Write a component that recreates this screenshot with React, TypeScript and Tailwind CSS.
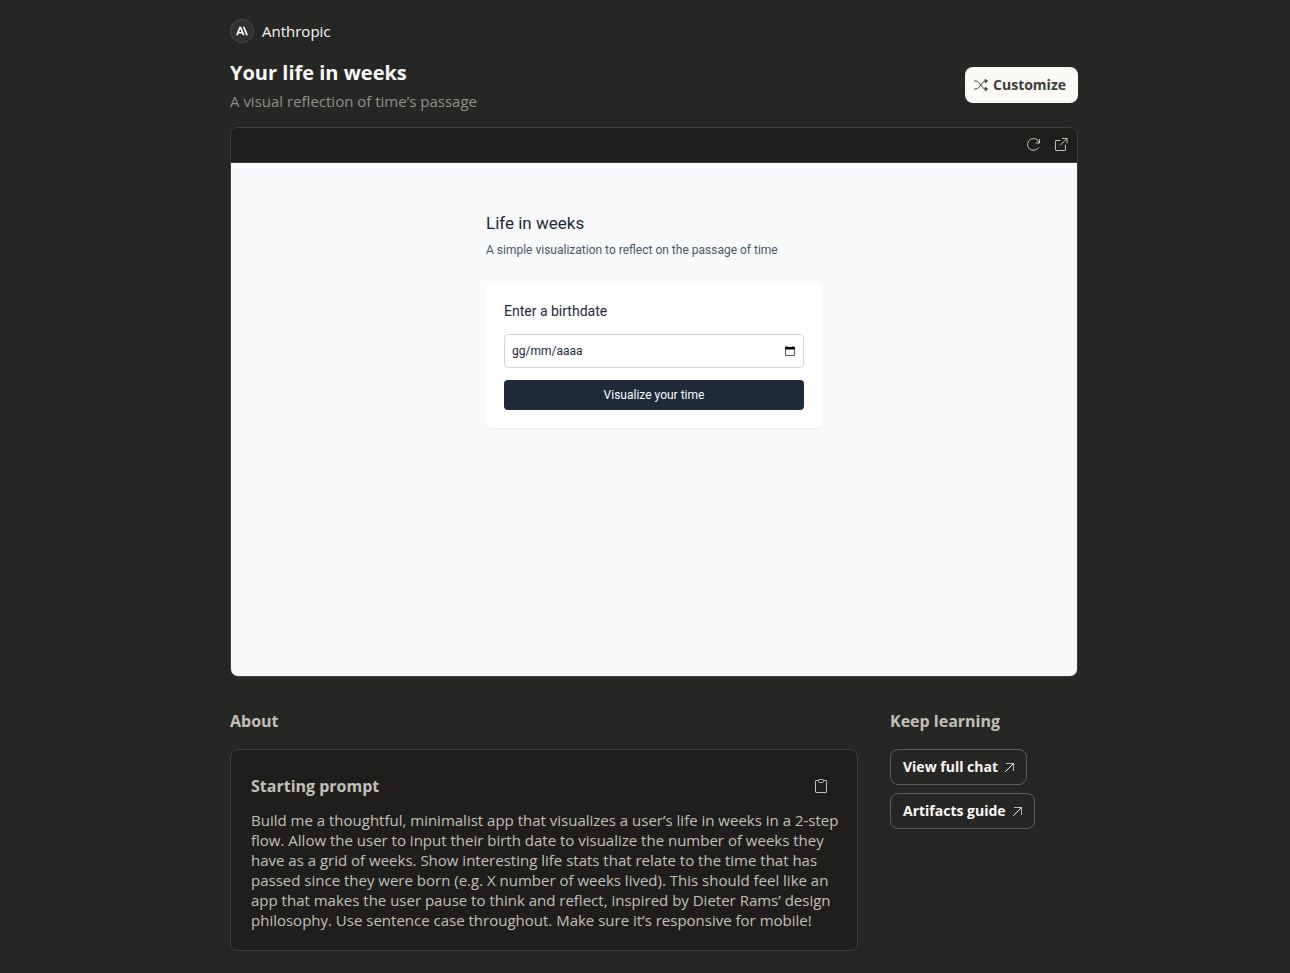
import { useState } from "react";

const PROMPT =
  "Build me a thoughtful, minimalist app that visualizes a user’s life in weeks in a 2-step flow. Allow the user to input their birth date to visualize the number of weeks they have as a grid of weeks. Show interesting life stats that relate to the time that has passed since they were born (e.g. X number of weeks lived). This should feel like an app that makes the user pause to think and reflect, inspired by Dieter Rams’ design philosophy. Use sentence case throughout. Make sure it’s responsive for mobile!";

const links = [
  { label: "View full chat", href: "#chat" },
  { label: "Artifacts guide", href: "#guide" },
];

function Logo() {
  return (
    <svg className="h-3 w-3" viewBox="0 0 24 24" fill="currentColor" aria-hidden="true">
      <path d="M17.3041 3.541h-3.6718l6.696 16.918H24Zm-10.6082 0L0 20.459h3.7442l1.3693-3.5527h7.0052l1.3693 3.5528h3.7442L10.5363 3.5409Zm-.3712 10.2232 2.2914-5.9456 2.2914 5.9456Z" />
    </svg>
  );
}

function ShuffleIcon() {
  return (
    <svg className="h-4 w-4" viewBox="0 0 16 16" fill="none" stroke="currentColor" strokeWidth="1" strokeLinecap="round" strokeLinejoin="round" aria-hidden="true">
      <path d="M1.500 4h1c1.600 0 2.700.8 3.700 2l3 4c1 1.200 2 2 3.500 2h.8" />
      <path d="M1.500 12h1c1.600 0 2.700-.8 3.700-2l3-4c1-1.200 2-2 3.500-2h.8" />
      <path d="M12.500 2.500 14.500 4l-2 1.500zM12.500 10.500l2 1.500-2 1.500z" fill="currentColor" />
    </svg>
  );
}

function ReloadIcon() {
  return (
    <svg className="h-4 w-4" viewBox="0 0 16 16" fill="none" stroke="currentColor" strokeWidth="1" strokeLinecap="round" strokeLinejoin="round" aria-hidden="true">
      <path d="M14.500 2.500v3.500h-3.500" />
      <path d="M14.300 5.800A6 6 0 1 0 13.500 10.800" />
    </svg>
  );
}

function OpenIcon() {
  return (
    <svg className="h-4 w-4" viewBox="0 0 16 16" fill="none" stroke="currentColor" strokeWidth="1" strokeLinecap="round" strokeLinejoin="round" aria-hidden="true">
      <path d="M7 3.500H3a.5.5 0 0 0-.5.5v9a.5.5 0 0 0 .5.5h9a.5.5 0 0 0 .5-.5V8" />
      <path d="M9.500 1.500h4.500V6M14 1.500 7.500 8" />
    </svg>
  );
}

function ClipboardIcon() {
  return (
    <svg className="h-4 w-4" viewBox="0 0 16 16" fill="none" stroke="currentColor" strokeWidth="1" strokeLinejoin="round" aria-hidden="true">
      <path d="M5.500 2.500H3a.5.5 0 0 0-.5.5v11a.5.5 0 0 0 .5.5h10a.5.5 0 0 0 .5-.5V3a.5.5 0 0 0-.5-.5h-2.500" />
      <path d="M5.500 2.200c0-.4.300-.7.700-.7h3.600c.4 0 .7.300.7.700v1.300a1 1 0 0 1-1 1h-3a1 1 0 0 1-1-1z" />
    </svg>
  );
}

function ArrowIcon() {
  return (
    <svg className="h-2.5 w-2.5" viewBox="0 0 10 10" fill="none" stroke="currentColor" strokeWidth="1" strokeLinecap="round" strokeLinejoin="round" aria-hidden="true">
      <path d="M2.500 1.500h7v7" opacity="0.7" />
      <path d="M9.500 1.500 1.500 9.500" />
    </svg>
  );
}

function CalendarIcon() {
  return (
    <svg className="h-3 w-3" viewBox="0 0 12 12" aria-hidden="true">
      <path d="M1.500 2.500h9v8h-9z" fill="none" stroke="#555" />
      <path d="M1 2h10v2.500H1zM2.500 1h1v1h-1zM8.500 1h1v1h-1z" fill="#000" />
    </svg>
  );
}

function LifeInWeeks() {
  const [birthdate, setBirthdate] = useState("");

  return (
    <div className="min-h-[513px] bg-[#f9fafc] px-4 pt-12 font-['Roboto',sans-serif] text-gray-800">
      <div className="mx-auto max-w-84">
        <h2 className="text-[17px] leading-6">Life in weeks</h2>
        <p className="mt-1 text-xs leading-[22px] text-gray-600">
          A simple visualization to reflect on the passage of time
        </p>

        <form
          onSubmit={(e) => e.preventDefault()}
          className="mt-[22px] rounded bg-white p-[18px] shadow-xs"
        >
          <label htmlFor="birthdate" className="block text-sm leading-[21px]">
            Enter a birthdate
          </label>
          <div className="mt-3 flex h-[34px] items-center rounded border border-gray-300 px-[7px]">
            <input
              id="birthdate"
              type="text"
              placeholder="gg/mm/aaaa"
              value={birthdate}
              onChange={(e) => setBirthdate(e.target.value)}
              className="min-w-0 flex-1 text-xs outline-none placeholder:text-gray-800"
            />
            <button type="button" aria-label="Open calendar">
              <CalendarIcon />
            </button>
          </div>
          <button
            type="submit"
            className="mt-3 h-[30px] w-full rounded bg-gray-800 text-xs text-white"
          >
            Visualize your time
          </button>
        </form>
      </div>
    </div>
  );
}

export default function App() {
  return (
    <div className="min-h-screen bg-[#262624] pr-4 pb-[22px] pl-[34px] font-['Open_Sans',sans-serif] text-[#faf9f5]">
      <main className="mx-auto max-w-[848px] pt-[19px]">
        <header className="flex items-end justify-between">
          <div>
            <div className="flex items-center gap-2">
              <span className="flex h-6 w-6 items-center justify-center rounded-full border border-[#4a4a46] bg-[#30302e]">
                <Logo />
              </span>
              <span className="text-[15px] leading-5">Anthropic</span>
            </div>
            <h1 className="mt-4 text-xl leading-7 font-bold">Your life in weeks</h1>
            <p className="mt-1 text-[15px] leading-5 text-[#91908a]">A visual reflection of time’s passage</p>
          </div>
          <button className="mb-2 flex h-9 items-center gap-1 rounded-lg bg-[#faf9f5] pr-3 pl-2 text-sm font-bold text-[#3d3d3a]">
            <ShuffleIcon />
            Customize
          </button>
        </header>

        <section className="mt-4 overflow-hidden rounded-lg border border-[#3e3e3a]">
          <div className="flex h-[35px] items-center justify-end gap-3 border-b border-[#3e3e3a] bg-[#1f1e1d] px-2 text-[#c2c0b6]">
            <button aria-label="Reload">
              <ReloadIcon />
            </button>
            <button aria-label="Open in new tab">
              <OpenIcon />
            </button>
          </div>
          <LifeInWeeks />
        </section>

        <div className="mt-8 flex flex-col gap-8 md:flex-row">
          <section className="min-w-0 flex-1">
            <h2 className="text-base leading-6 font-bold text-[#c2c0b6]">About</h2>
            <div className="mt-4 rounded-lg border border-[#3e3e3a] bg-[#1f1e1d] py-5 pr-4 pl-5 text-[#c2c0b6]">
              <div className="flex h-8 items-center justify-between pr-3">
                <h3 className="text-base leading-6 font-bold">Starting prompt</h3>
                <button aria-label="Copy prompt">
                  <ClipboardIcon />
                </button>
              </div>
              <p className="mt-2 text-[15px] leading-5">{PROMPT}</p>
            </div>
          </section>

          <section className="md:w-[188px]">
            <h2 className="text-base leading-6 font-bold text-[#c2c0b6]">Keep learning</h2>
            <div className="mt-4 flex flex-col items-start gap-2">
              {links.map((link) => (
                <a
                  key={link.label}
                  href={link.href}
                  className="flex h-9 items-center gap-1.5 rounded-lg border border-[#5e5d59] px-3 text-sm font-bold"
                >
                  {link.label}
                  <ArrowIcon />
                </a>
              ))}
            </div>
          </section>
        </div>
      </main>
    </div>
  );
}
